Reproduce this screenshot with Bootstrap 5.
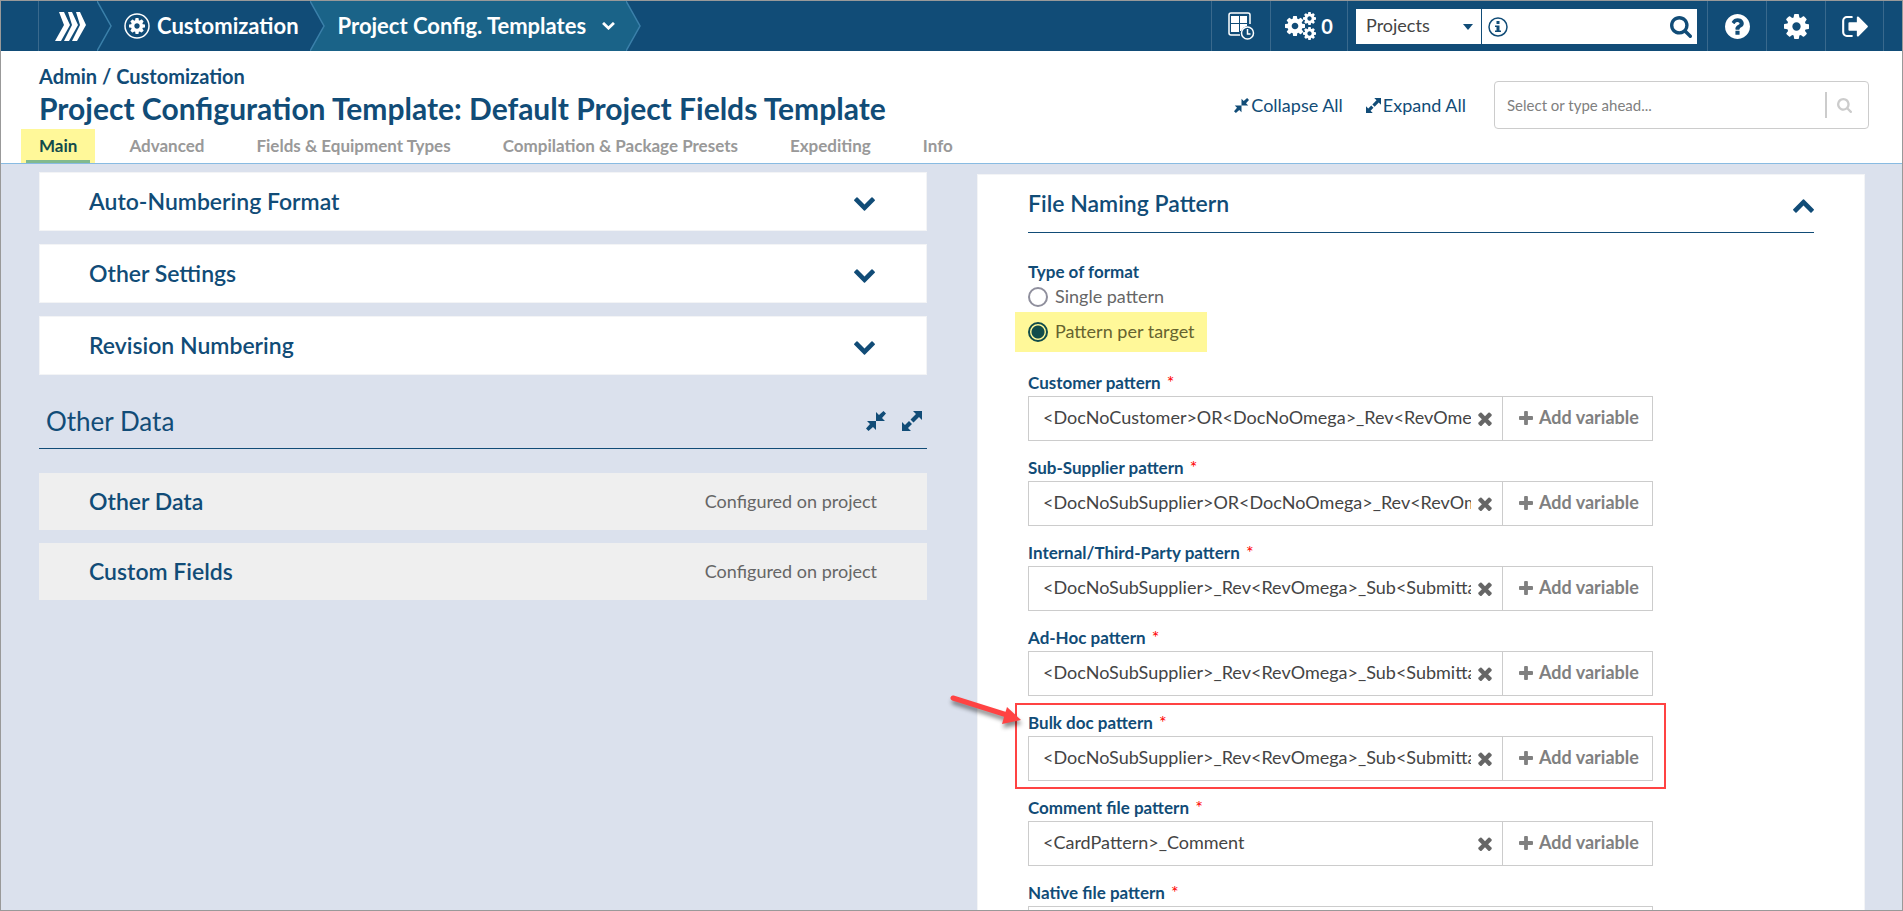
<!DOCTYPE html>
<html lang="en">
<head>
<meta charset="utf-8">
<meta name="viewport" content="width=device-width, initial-scale=1">
<title>Project Configuration Template</title>
<link rel="stylesheet" href="https://cdn.jsdelivr.net/npm/bootstrap@5.3.0/dist/css/bootstrap.min.css">
<style>
:root { --navy: #114c77; --teal: #1a6388; --page: #dbe1ed; }
html, body { height: 100%; }
body { font-family: Lato, "Liberation Sans", sans-serif; font-size: 18px; color: #666; background: var(--page); overflow: hidden; }
a { color: var(--navy); text-decoration: none; }
.ico { fill: currentColor; display: block; flex: none; }
.navy { color: var(--navy); }
.frame { border: 1px solid #999; height: 100vh; overflow: hidden; }

.topbar { background: var(--navy); height: 50px; color: #fff; padding-left: 37px; padding-right: 18px; }
.topbar a { color: #fff; }
.crumb-logo { border-left: 1px solid #39698d; padding-left: 16px; width: 59px; }
.crumb-arrow { width: 16px; height: 50px; display: block; flex: none; }
.crumb-text { font-size: 22px; font-weight: 700; line-height: 50px; }
.crumb-home { padding-left: 11px; gap: 7px; margin-right: 11px; }
.crumb-page { background: var(--teal); padding-left: 12px; padding-right: 11px; gap: 16px; }
.tool { border: 0; border-left: 1px solid #39698d; width: 59px; height: 50px; background: none; color: #fff; padding: 0; display: flex; align-items: center; justify-content: center; }
.tool-count { width: 77px; font-size: 20px; font-weight: 700; gap: 5px; }
.tool-end { border-right: 1px solid #39698d; }
.scope { padding: 8px 10px 7px 8px; border-left: 1px solid #39698d; width: 360px; }
.scope select { width: 125px; font-size: 18px; color: #444; border: 0; border-radius: 0; padding: 0 0 2px 10px; appearance: none; background: #fff; }
.scope .caret { right: 8px; top: 15px; pointer-events: none; color: var(--navy); }
.scope .find { background: #fff; margin-left: 1px; color: var(--navy); padding: 0 5px 0 6px; min-width: 0; }
.scope input { border: 0; min-width: 0; width: 50px; background: none; }

.head { background: #fff; border-bottom: 1px solid #88bbe2; height: 113px; padding: 13px 33px 0 38px; }
.trail { font-size: 20px; line-height: 24px; font-weight: 700; color: var(--navy); }
.title { font-size: 30px; line-height: 40px; font-weight: 700; color: var(--navy); margin: 0; }
.tabs { gap: 52px; margin-top: 1px; }
.tabs a { font-size: 17px; line-height: 34px; height: 34px; color: #999; font-weight: 700; }
.tabs .on { color: #114b4b; background: #fff899; padding: 0 18px; margin: 0 -18px; position: relative; }
.tabs .on::after { content: ""; position: absolute; left: 5px; right: 5px; bottom: 0; height: 3px; background: #82b98e; }
.head-tools { padding-top: 17px; font-size: 18px; }
.head-tools a { gap: 2px; margin-right: 23px; padding-top: 1px; }
.ahead { width: 375px; height: 48px; border: 1px solid #ccc; border-radius: 4px; padding: 0 16px 0 12px; margin-left: 5px; }
.ahead input { border: 0; font-size: 15px; min-width: 0; padding: 0; color: #888; }
.ahead input::placeholder { color: #808080; opacity: 1; }
.ahead .bar { width: 2px; height: 26px; background: #ccc; margin-right: 10px; }
.ahead .ico { color: #ccc; }

.cols { padding: 8px 37px 0 38px; display: grid; grid-template-columns: 1fr 1fr; column-gap: 50px; align-items: start; }
.panel { background: #fff; border: 1px solid #f3f4f6; height: 59px; padding: 0 51px 0 49px; color: var(--navy); width: 100%; margin-bottom: 13px; }
.panel .ico, .sheet-head .ico { margin-top: 4px; }
.panel-name { font-size: 23px; font-weight: 600; color: var(--navy); margin: 0; line-height: 30px; padding-bottom: 2px; }
.flat { background: #efefef; height: 57px; border: 0; padding: 0 50px; color: #666; }
.group { border-bottom: 1px solid var(--navy); height: 61px; margin-bottom: 24px; padding: 6px 5px 0 7px; color: var(--navy); }
.group h2 { font-size: 26px; margin: 0; line-height: 36px; font-weight: 400; }
.group button { color: var(--navy); }

.sheet { background: #fff; border: 1px solid #f3f4f6; margin-top: 2px; padding: 0 50px 50px; }
.sheet-head { height: 58px; border-bottom: 1px solid var(--navy); margin-bottom: 28px; }
.lab { display: block; font-size: 17px; line-height: 22px; padding-bottom: 2px; font-weight: 700; color: var(--navy); margin: 0; }
.lab i { color: #f00; font-style: normal; font-weight: 400; font-size: 18px; margin-left: 2px; }
.opt { display: flex; align-items: center; gap: 7px; width: max-content; line-height: 24px; }
.opt span { padding-bottom: 2px; line-height: 22px; }
.opt input { appearance: none; width: 20px; height: 20px; border: 2px solid #8f8f9d; border-radius: 50%; margin: 0; background: #fff; }
.opt.on { background: #fff899; color: #66632f; margin: 3px 0 19px -13px; padding: 8px 12px 8px 13px; }
.opt.on input { border-color: #114c4b; background: radial-gradient(circle, #114c4b 0 6px, transparent 7px); }
.field { max-width: 625px; margin-bottom: 15px; position: relative; }
.field .lab { line-height: 23px; }
.entry { border: 1px solid #ccc; height: 45px; }
.entry input { border: 0; flex: 1; min-width: 0; padding: 0 0 2px; margin-left: 14px; color: #444; font-size: 18px; }
.entry button { border: 0; background: none; padding: 0; }
.entry .wipe { color: #666; width: 31px; padding-left: 7px; }
.entry .add { width: 150px; border-left: 1px solid #ccc; color: #808080; font-weight: 700; font-size: 18px; padding: 0 0 2px 16px; display: flex; align-items: center; gap: 6px; }
.callout { position: absolute; inset: -8px -13px; border: 2px solid #ff4343; pointer-events: none; }
.pointer { position: absolute; left: -82px; top: -19px; pointer-events: none; overflow: visible; filter: drop-shadow(1px 4px 2px rgba(0,0,0,.45)); }
</style>
</head>
<body>
<svg width="0" height="0" class="position-absolute" aria-hidden="true">
<defs>
<symbol id="cog" viewBox="128 128 1536 1536"><path d="M1152 896q0-106-75-181t-181-75-181 75-75 181 75 181 181 75 181-75 75-181zm512-109v222q0 12-8 23t-20 13l-185 28q-19 54-39 91 35 50 107 138 10 12 10 25t-9 23q-27 37-99 108t-94 71q-12 0-26-9l-138-108q-44 23-91 38-16 136-29 186-7 28-36 28h-222q-14 0-24.5-8.5t-11.5-21.5l-28-184q-49-16-90-37l-141 107q-10 9-25 9-14 0-25-11-126-114-165-168-7-10-7-23 0-12 8-23 15-21 51-66.5t54-70.5q-27-50-41-99l-183-27q-13-2-21-12.5t-8-23.5v-222q0-12 8-23t19-13l186-28q14-46 39-92-40-57-107-138-10-12-10-24 0-10 9-23 26-36 98.500-107.500t94.500-71.500q13 0 26 10l138 107q44-23 91-38 16-136 29-186 7-28 36-28h222q14 0 24.500 8.500t11.500 21.500l28 184q49 16 90 37l142-107q9-9 24-9 13 0 25 10 129 119 165 170 7 8 7 22 0 12-8 23-15 21-51 66.500t-54 70.500q26 50 41 98l183 28q13 2 21 12.500t8 23.500z"/></symbol>
<symbol id="search" viewBox="64 128 1664 1664"><path d="M1216 832q0-185-131.500-316.500t-316.500-131.500-316.500 131.500-131.500 316.500 131.500 316.500 316.500 131.500 316.500-131.500 131.500-316.500zm512 832q0 52-38 90t-90 38q-54 0-90-38l-343-342q-179 124-399 124-143 0-273.500-55.500t-225-150-150-225-55.500-273.500 55.500-273.500 150-225 225-150 273.500-55.500 273.500 55.500 225 150 150 225 55.500 273.500q0 220-124 399l343 343q37 37 37 90z"/></symbol>
<symbol id="down" viewBox="90 533 1612 1035"><path d="M1683 808l-742 741q-19 19-45 19t-45-19l-742-741q-19-19-19-45.500t19-45.500l166-165q19-19 45-19t45 19l531 531 531-531q19-19 45-19t45 19l166 165q19 19 19 45.500t-19 45.500z"/></symbol>
<symbol id="times" viewBox="302 238 1188 1316"><path d="M1490 1322q0 40-28 68l-136 136q-28 28-68 28t-68-28l-294-294-294 294q-28 28-68 28t-68-28l-136-136q-28-28-28-68t28-68l294-294-294-294q-28-28-28-68t28-68l136-136q28-28 68-28t68 28l294 294 294-294q28-28 68-28t68 28l136 136q28 28 28 68t-28 68l-294 294 294 294q28 28 28 68z"/></symbol>
<symbol id="plus" viewBox="192 128 1408 1408"><path d="M1600 736v192q0 40-28 68t-68 28h-416v416q0 40-28 68t-68 28h-192q-40 0-68-28t-28-68v-416h-416q-40 0-68-28t-28-68v-192q0-40 28-68t68-28h416v-416q0-40 28-68t68-28h192q40 0 68 28t28 68v416h416q40 0 68 28t28 68z"/></symbol>
<symbol id="exit" viewBox="64 256 1568 1280"><path d="M704 1440q0 4 1 20t.5 26.500-3 23.500-10 19.500-20.500 6.500h-320q-119 0-203.500-84.500t-84.500-203.500v-704q0-119 84.500-203.500t203.500-84.500h320q13 0 22.500 9.500t9.500 22.500q0 4 1 20t.5 26.500-3 23.500-10 19.500-20.500 6.500h-320q-66 0-113 47t-47 113v704q0 66 47 113t113 47h312l11.500 1 11.500 3 8 5.500 7 9 2 13.500zm928-544q0 26-19 45l-544 544q-19 19-45 19t-45-19-19-45v-288h-448q-26 0-45-19t-19-45v-384q0-26 19-45t45-19h448v-288q0-26 19-45t45-19 45 19l544 544q19 19 19 45z"/></symbol>
<symbol id="help" viewBox="128 128 1536 1536"><path d="M1024 1376v-192q0-14-9-23t-23-9h-192q-14 0-23 9t-9 23v192q0 14 9 23t23 9h192q14 0 23-9t9-23zm256-672q0-88-55.500-163t-138.500-116-170-41q-243 0-371 213-15 24 8 42l132 100q7 6 19 6 16 0 25-12 53-68 86-92 34-24 86-24 48 0 85.500 26t37.500 59q0 38-20 61t-68 45q-63 28-115.500 86.500t-52.500 125.500v36q0 14 9 23t23 9h192q14 0 23-9t9-23q0-19 21.500-49.500t54.500-49.500q32-18 49-28.500t46-35 44.500-48 28-60.500 12.500-81zm384 192q0 209-103 385.500t-279.500 279.500-385.500 103-385.500-103-279.500-279.500-103-385.500 103-385.500 279.500-279.500 385.500-103 385.500 103 279.500 279.500 103 385.500z"/></symbol>
<symbol id="expand" viewBox="0 0 20 20"><path d="M11 0h9v9l-3-3-5.500 5.500L8.500 8.500 14 3zM9 20H0v-9l3 3 4-4 3 3-4 4z"/></symbol>
<symbol id="shrink" viewBox="0 0 20 20"><path d="M10 10V1l3 3 4.500-4L20 2.500 16 7l3 3zM10 10v9l-3-3-4.500 4L0 17.500 4 13l-3-3z"/></symbol>
</defs>
</svg>

<div class="frame">
<nav class="topbar d-flex align-items-center" aria-label="Main navigation">
  <a href="#" class="crumb-logo d-flex align-items-center h-100" aria-label="Home">
    <svg class="ico" width="31" height="29" viewBox="0 0 31 29"><path d="M4 0h5l6 13-9 16H0l9-16zM13 0h4l6 13-9 16H9l8-16zM21 0h4l6 13-9 16h-5l8-16z"/></svg>
  </a>
  <svg class="crumb-arrow" viewBox="0 0 16 50"><path d="M0 0l14 25L0 50" fill="none" stroke="#3b80aa" stroke-width="1.500"/></svg>
  <a href="#" class="crumb-text crumb-home d-flex align-items-center">
    <svg class="ico" width="26" height="26" viewBox="0 0 26 26"><circle cx="13" cy="13" r="12" fill="none" stroke="currentColor" stroke-width="1.500"/><use href="#cog" x="5" y="5" width="16" height="16"/></svg>Customization
  </a>
  <svg class="crumb-arrow" viewBox="0 0 16 50"><path d="M0 0h16v50H0l14-25z" fill="#1a6388"/><path d="M0 0l14 25L0 50" fill="none" stroke="#3b80aa" stroke-width="1.500"/></svg>
  <a href="#" class="crumb-text crumb-page d-flex align-items-center">Project Config. Templates
    <svg class="ico" width="13" height="8"><use href="#down"/></svg></a>
  <svg class="crumb-arrow" viewBox="0 0 16 50"><path d="M0 0l14 25L0 50z" fill="#1a6388"/><path d="M0 0l14 25L0 50" fill="none" stroke="#3b80aa" stroke-width="1.500"/></svg>

  <div class="ms-auto d-flex h-100">
    <button class="tool" aria-label="Schedule">
      <svg class="ico" width="27" height="28" viewBox="0 0 27 28"><g fill="none" stroke="currentColor" stroke-width="1.500"><path d="M12 23H3q-2 0-2-2V3q0-2 2-2h17q2 0 2 2v9"/><circle cx="19.500" cy="21" r="6"/><path d="M19.500 17v5h3"/></g><path d="M3 4h8v7H3zM12 4h7v7h-7zM3 12h8v8H3zM12 12h7v2q-4 1-6 5h-1z"/></svg>
    </button>
    <button class="tool tool-count">
      <svg class="ico" width="31" height="28" viewBox="0 0 31 28"><use href="#cog" x="0" y="4" width="20" height="20"/><use href="#cog" x="18" y="0" width="13" height="13"/><use href="#cog" x="18" y="15" width="13" height="13"/></svg>0
    </button>
    <div class="scope d-flex">
      <div class="position-relative d-flex">
        <select aria-label="Search in"><option>Projects</option></select>
        <svg class="ico caret position-absolute" width="10" height="6" viewBox="0 0 10 6"><path d="M0 0h10L5 6z"/></svg>
      </div>
      <div class="find d-flex align-items-center flex-fill">
        <svg class="ico" width="20" height="20" viewBox="0 0 20 20"><circle cx="10" cy="10" r="9" fill="none" stroke="currentColor" stroke-width="1.500"/><path d="M8.500 4h3v3h-3zM7 8.500h4.500v5H13V15H7v-1.500h1.500V10H7z"/></svg>
        <input type="text" class="flex-fill" aria-label="Search text">
        <svg class="ico" width="22" height="22"><use href="#search"/></svg>
      </div>
    </div>
    <button class="tool" aria-label="Help"><svg class="ico" width="25" height="25"><use href="#help"/></svg></button>
    <button class="tool" aria-label="Settings"><svg class="ico" width="25" height="25"><use href="#cog"/></svg></button>
    <button class="tool tool-end" aria-label="Log out"><svg class="ico" width="26" height="21"><use href="#exit"/></svg></button>
  </div>
</nav>

<header class="head d-flex justify-content-between">
  <div>
    <div class="trail"><a href="#">Admin</a> / <a href="#">Customization</a></div>
    <h1 class="title">Project Configuration Template: Default Project Fields Template</h1>
    <nav class="tabs d-flex" aria-label="Sections">
      <a href="#" class="on" aria-current="page">Main</a>
      <a href="#">Advanced</a>
      <a href="#">Fields &amp; Equipment Types</a>
      <a href="#">Compilation &amp; Package Presets</a>
      <a href="#">Expediting</a>
      <a href="#">Info</a>
    </nav>
  </div>
  <div class="head-tools d-flex align-items-center align-self-start">
    <a href="#" class="d-flex align-items-center"><svg class="ico" width="15" height="15"><use href="#shrink"/></svg>Collapse All</a>
    <a href="#" class="d-flex align-items-center"><svg class="ico" width="15" height="15"><use href="#expand"/></svg>Expand All</a>
    <div class="ahead d-flex align-items-center">
      <input type="text" class="flex-fill" placeholder="Select or type ahead..." aria-label="Select or type ahead">
      <span class="bar"></span>
      <svg class="ico" width="15" height="15"><use href="#search"/></svg>
    </div>
  </div>
</header>

<main class="cols">
  <section>
    <button class="panel d-flex align-items-center justify-content-between text-start"><span class="panel-name">Auto-Numbering Format</span><svg class="ico" width="21" height="14"><use href="#down"/></svg></button>
    <button class="panel d-flex align-items-center justify-content-between text-start"><span class="panel-name">Other Settings</span><svg class="ico" width="21" height="14"><use href="#down"/></svg></button>
    <button class="panel d-flex align-items-center justify-content-between text-start"><span class="panel-name">Revision Numbering</span><svg class="ico" width="21" height="14"><use href="#down"/></svg></button>
    <div class="group d-flex align-items-center justify-content-between">
      <h2>Other Data</h2>
      <div class="d-flex gap-3">
        <button class="border-0 bg-transparent p-0" aria-label="Collapse group"><svg class="ico" width="20" height="20"><use href="#shrink"/></svg></button>
        <button class="border-0 bg-transparent p-0" aria-label="Expand group"><svg class="ico" width="20" height="20"><use href="#expand"/></svg></button>
      </div>
    </div>
    <div class="panel flat d-flex align-items-center justify-content-between"><h3 class="panel-name">Other Data</h3><span>Configured on project</span></div>
    <div class="panel flat d-flex align-items-center justify-content-between"><h3 class="panel-name">Custom Fields</h3><span>Configured on project</span></div>
  </section>

  <section class="sheet">
    <div class="sheet-head d-flex align-items-center justify-content-between">
      <h2 class="panel-name">File Naming Pattern</h2>
      <button class="navy border-0 bg-transparent p-0" aria-label="Collapse"><svg class="ico" width="21" height="14" viewBox="0 0 21 14"><g transform="rotate(180 10.500 7)"><use href="#down" width="21" height="14"/></g></svg></button>
    </div>
    <div class="lab">Type of format</div>
    <label class="opt"><input type="radio" name="format"><span>Single pattern</span></label>
    <label class="opt on"><input type="radio" name="format" checked><span>Pattern per target</span></label>

    <div class="field"><label class="lab" for="f1">Customer pattern <i>*</i></label>
      <div class="entry d-flex"><input id="f1" type="text" value="&lt;DocNoCustomer&gt;OR&lt;DocNoOmega&gt;_Rev&lt;RevOmega&gt;"><button class="wipe" aria-label="Clear"><svg class="ico" width="14" height="15"><use href="#times"/></svg></button><button class="add"><svg class="ico" width="14" height="14"><use href="#plus"/></svg>Add variable</button></div></div>
    <div class="field"><label class="lab" for="f2">Sub-Supplier pattern <i>*</i></label>
      <div class="entry d-flex"><input id="f2" type="text" value="&lt;DocNoSubSupplier&gt;OR&lt;DocNoOmega&gt;_Rev&lt;RevOmega&gt;"><button class="wipe" aria-label="Clear"><svg class="ico" width="14" height="15"><use href="#times"/></svg></button><button class="add"><svg class="ico" width="14" height="14"><use href="#plus"/></svg>Add variable</button></div></div>
    <div class="field"><label class="lab" for="f3">Internal/Third-Party pattern <i>*</i></label>
      <div class="entry d-flex"><input id="f3" type="text" value="&lt;DocNoSubSupplier&gt;_Rev&lt;RevOmega&gt;_Sub&lt;Submittal&gt;"><button class="wipe" aria-label="Clear"><svg class="ico" width="14" height="15"><use href="#times"/></svg></button><button class="add"><svg class="ico" width="14" height="14"><use href="#plus"/></svg>Add variable</button></div></div>
    <div class="field"><label class="lab" for="f4">Ad-Hoc pattern <i>*</i></label>
      <div class="entry d-flex"><input id="f4" type="text" value="&lt;DocNoSubSupplier&gt;_Rev&lt;RevOmega&gt;_Sub&lt;Submittal&gt;"><button class="wipe" aria-label="Clear"><svg class="ico" width="14" height="15"><use href="#times"/></svg></button><button class="add"><svg class="ico" width="14" height="14"><use href="#plus"/></svg>Add variable</button></div></div>
    <div class="field"><label class="lab" for="f5">Bulk doc pattern <i>*</i></label>
      <div class="entry d-flex"><input id="f5" type="text" value="&lt;DocNoSubSupplier&gt;_Rev&lt;RevOmega&gt;_Sub&lt;Submittal&gt;"><button class="wipe" aria-label="Clear"><svg class="ico" width="14" height="15"><use href="#times"/></svg></button><button class="add"><svg class="ico" width="14" height="14"><use href="#plus"/></svg>Add variable</button></div>
      <span class="callout"></span>
      <svg class="pointer" width="80" height="40" viewBox="0 0 80 40"><path d="M7 6l54 17" stroke="#ff4343" stroke-width="5" stroke-linecap="round"/><path d="M61 15l14 13-19 4z" fill="#ff4343"/></svg></div>
    <div class="field"><label class="lab" for="f6">Comment file pattern <i>*</i></label>
      <div class="entry d-flex"><input id="f6" type="text" value="&lt;CardPattern&gt;_Comment"><button class="wipe" aria-label="Clear"><svg class="ico" width="14" height="15"><use href="#times"/></svg></button><button class="add"><svg class="ico" width="14" height="14"><use href="#plus"/></svg>Add variable</button></div></div>
    <div class="field"><label class="lab" for="f7">Native file pattern <i>*</i></label>
      <div class="entry d-flex"><input id="f7" type="text"></div></div>
  </section>
</main>
</div>
<script src="https://cdn.jsdelivr.net/npm/bootstrap@5.3.0/dist/js/bootstrap.bundle.min.js"></script>
</body>
</html>
